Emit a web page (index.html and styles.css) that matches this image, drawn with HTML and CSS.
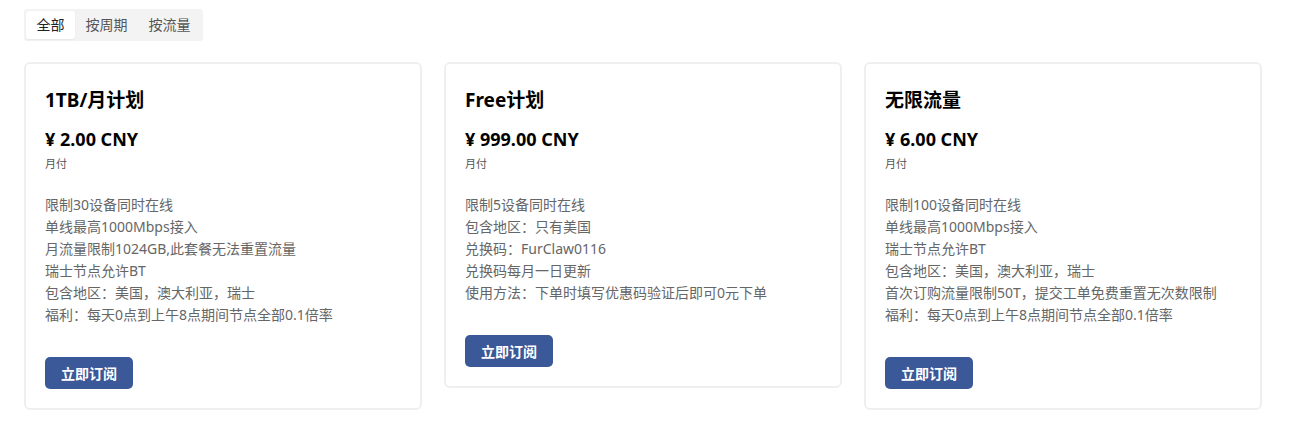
FILE: index.html
```html
<!DOCTYPE html>
<html lang="zh-CN">
<head>
	<meta charset="UTF-8">
	<title>套餐</title>
	<link rel="stylesheet" href="styles.css">
</head>
<body>
	<div id="page">
		<div class="tabs">
			<span class="tab active">全部</span>
			<span class="tab">按周期</span>
			<span class="tab">按流量</span>
		</div>

		<div class="plans">
			<div class="card">
				<h3 class="title">1TB/月计划</h3>
				<div class="price">¥ 2.00 CNY</div>
				<div class="period">月付</div>
				<ul class="features">
					<li>限制30设备同时在线</li>
					<li>单线最高1000Mbps接入</li>
					<li>月流量限制1024GB,此套餐无法重置流量</li>
					<li>瑞士节点允许BT</li>
					<li>包含地区：美国，澳大利亚，瑞士</li>
					<li>福利：每天0点到上午8点期间节点全部0.1倍率</li>
				</ul>
				<button class="btn">立即订阅</button>
			</div>

			<div class="card">
				<h3 class="title">Free计划</h3>
				<div class="price">¥ 999.00 CNY</div>
				<div class="period">月付</div>
				<ul class="features">
					<li>限制5设备同时在线</li>
					<li>包含地区：只有美国</li>
					<li>兑换码：FurClaw0116</li>
					<li>兑换码每月一日更新</li>
					<li>使用方法：下单时填写优惠码验证后即可0元下单</li>
				</ul>
				<button class="btn">立即订阅</button>
			</div>

			<div class="card">
				<h3 class="title">无限流量</h3>
				<div class="price">¥ 6.00 CNY</div>
				<div class="period">月付</div>
				<ul class="features">
					<li>限制100设备同时在线</li>
					<li>单线最高1000Mbps接入</li>
					<li>瑞士节点允许BT</li>
					<li>包含地区：美国，澳大利亚，瑞士</li>
					<li>首次订购流量限制50T，提交工单免费重置无次数限制</li>
					<li>福利：每天0点到上午8点期间节点全部0.1倍率</li>
				</ul>
				<button class="btn">立即订阅</button>
			</div>
		</div>
	</div>
</body>
</html>
```

FILE: styles.css
```css
body {
	margin: 0;
	font-family: "Noto Sans", "Noto Sans CJK SC", sans-serif;
	font-size: 14px;
	color: #222;
	background: #fff;
}
#page {
	width: 1238px;
	padding: 9px 0 0 24px;
}

/*标签切换*/
.tabs {
	display: inline-flex;
	padding: 2px;
	background: #f3f3f3;
	border-radius: 3px;
}
.tab {
	padding: 0 10.5px;
	height: 28px;
	line-height: 28px;
	color: #555;
	border-radius: 3px;
	cursor: pointer;
}
.tab.active {
	color: #222;
	background: #fff;
	box-shadow: 0 1px 2px rgba(0,0,0,.06);
}

/*套餐卡片*/
.plans {
	display: grid;
	grid-template-columns: repeat(3, 1fr);
	gap: 22px;
	align-items: start;
	margin-top: 21px;
}
.card {
	padding: 20px 19px 19px;
	border: 2px solid #efefef;
	border-radius: 6px;
	background: #fff;
}
.title {
	margin: 0;
	font-size: 19px;
	line-height: 32px;
	font-weight: bold;
	color: #000;
}
.price {
	margin-top: 10px;
	font-size: 18px;
	line-height: 26px;
	font-weight: bold;
	color: #000;
}
.period {
	margin-top: 2px;
	font-size: 11px;
	line-height: 20px;
	color: #555;
}
.features {
	list-style: none;
	margin: 20px 0 0;
	padding: 0;
	font-size: 14px;
	line-height: 22px;
	color: #666;
}
.btn {
	display: block;
	margin-top: 31px;
	height: 32px;
	padding: 0 16px;
	border: 0;
	border-radius: 5px;
	background: #3b5898;
	color: #fff;
	font-family: inherit;
	font-size: 14px;
	font-weight: bold;
	cursor: pointer;
}
```
